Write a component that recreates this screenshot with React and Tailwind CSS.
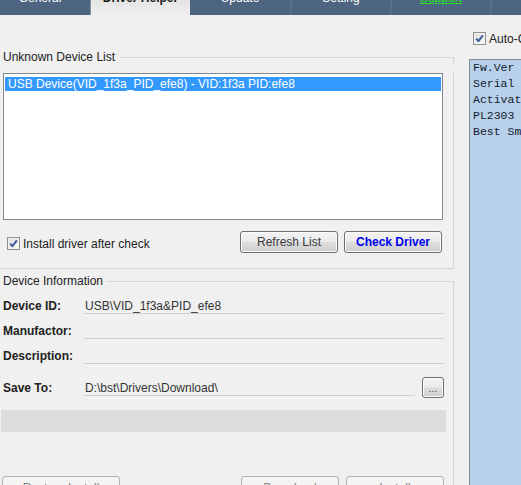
import React from "react";

// Win7-style checkbox with a blue tick
function CheckBox() {
  return (
    <span className="flex h-[13px] w-[13px] shrink-0 items-center justify-center border border-[#8e8f8f] bg-linear-to-br from-[#dcdcdc] to-[#fbfbfb] shadow-[inset_0_0_0_1px_#f4f4f4]">
      <svg viewBox="0 0 11 11" className="h-[11px] w-[11px]">
        <path d="M2.2 5.6 L4.4 8.2 L8.9 2.4" stroke="#3b5a9a" strokeWidth="1.9" fill="none" strokeLinejoin="round" />
      </svg>
    </span>
  );
}

function Button({ children, className = "" }) {
  return (
    <div
      className={
        "flex items-center justify-center rounded-[3px] border border-[#707070] bg-[linear-gradient(#f3f3f3_0%,#ebebeb_48%,#dddddd_52%,#cfcfcf_100%)] text-[12px] leading-[14px] shadow-[inset_0_0_0_1px_#fbfbfb] " +
        className
      }
    >
      {children}
    </div>
  );
}

function DisabledButton({ children, className = "" }) {
  return (
    <div
      className={
        "flex h-[23px] items-center justify-center rounded-[3px] border border-[#adb2b5] bg-[#f4f4f4] text-[12px] leading-[14px] text-[#838383] " +
        className
      }
    >
      {children}
    </div>
  );
}

function InfoRow({ label, value }) {
  return (
    <div className="flex items-end pr-[9px] h-[25px] first:h-[26px]">
      <div className="ml-[3px] w-[81px] shrink-0 pb-[1px] font-bold leading-[14px] text-[#222]">{label}</div>
      <div className="flex-1 border-b border-[#cfcfcf] pl-[1px] leading-[14px] text-[#333]">{value}</div>
    </div>
  );
}

export default function App() {
  return (
    <div className="relative h-[485px] w-[521px] overflow-hidden bg-[#f0f0f0] font-['Liberation_Sans',Arial,sans-serif] text-[12px] text-[#222]">
      {/* tab strip */}
      <div className="flex h-[15px] overflow-hidden bg-[#4e6581]">
        <div className="-ml-[10px] flex">
          <div className="h-[15px] w-[100px] shrink-0 text-center text-white">
            <div className="-mt-[9px] leading-[15px]">General</div>
          </div>
          <div className="h-[15px] w-[100px] shrink-0 border-l border-[#7d8ea3] bg-linear-to-b from-[#e4e4e4] to-[#f0f0f0] text-center font-bold text-[#1a1a1a]">
            <div className="-mt-[9px] leading-[15px]">Driver Helper</div>
          </div>
          <div className="h-[15px] w-[100px] shrink-0 text-center text-white">
            <div className="-mt-[9px] leading-[15px]">Update</div>
          </div>
          <div className="h-[15px] w-[100px] shrink-0 border-l-2 border-[#587090] text-center text-white">
            <div className="-mt-[9px] leading-[15px]">Setting</div>
          </div>
          <div className="h-[15px] w-[100px] shrink-0 border-l-2 border-[#587090] text-center text-[#22e622] underline">
            <div className="-mt-[9px] leading-[15px]">Support</div>
          </div>
          <div className="h-[15px] w-[100px] shrink-0 border-l-2 border-[#587090]" />
        </div>
      </div>

      <div className="flex">
        {/* left column */}
        <div className="w-[454px] shrink-0">
          {/* Unknown Device List group */}
          <div className="mt-[35px]">
            <div className="flex h-[14px]">
              <span className="pl-[3px] pr-[5px] leading-[14px]">Unknown Device List</span>
              <div className="mt-[7px] flex-1 border-r border-t border-[#d5d5d5]" />
            </div>
            <div className="border-b border-r border-[#d5d5d5] pb-[15px]">
              <div className="ml-[3px] mt-[9px] h-[147px] w-[440px] border border-[#828790] bg-white px-[1px] pt-[3px]">
                <div className="h-[14px] whitespace-nowrap bg-[#3399ff] pl-[3px] leading-[14px] text-white">
                  USB Device(VID_1f3a_PID_efe8) - VID:1f3a PID:efe8
                </div>
              </div>
              <div className="mt-[11px] flex h-[22px] items-center pr-[11px]">
                <div className="ml-[7px] mt-[3px] flex items-center gap-[3px]">
                  <CheckBox />
                  <span className="leading-[14px]">Install driver after check</span>
                </div>
                <div className="ml-auto flex gap-[6px]">
                  <Button className="h-[22px] w-[98px] text-[#3a3a3a]">Refresh List</Button>
                  <Button className="h-[22px] w-[98px] font-bold text-[#0000ee]">Check Driver</Button>
                </div>
              </div>
            </div>
          </div>

          {/* Device Information group */}
          <div className="mt-[5px]">
            <div className="flex h-[14px]">
              <span className="pl-[3px] pr-[4px] leading-[14px]">Device Information</span>
              <div className="mt-[7px] flex-1 border-r border-t border-[#d5d5d5]" />
            </div>
            <div className="border-r border-[#d5d5d5] pb-[20px]">
              <InfoRow label="Device ID:" value="USB\VID_1f3a&PID_efe8" />
              <InfoRow label="Manufactor:" value="" />
              <InfoRow label="Description:" value="" />
              <div className="flex h-[34px] items-end pr-[9px]">
                <div className="ml-[3px] w-[81px] shrink-0 pb-[3px] font-bold leading-[14px] text-[#222]">Save To:</div>
                <div className="mb-[2px] mr-[7px] flex-1 border-b border-[#cfcfcf] pl-[1px] leading-[14px] text-[#333]">
                  D:\bst\Drivers\Download\
                </div>
                <Button className="h-[21px] w-[22px] text-[#444]">
                  <span className="mt-[3px] text-[10px] leading-[10px] tracking-[0px]">...</span>
                </Button>
              </div>

              <div className="ml-[1px] mt-[12px] h-[22px] w-[445px] bg-[#dcdcdc]" />

              <div className="mt-[44px] flex">
                <DisabledButton className="ml-[2px] w-[118px]">Restore Install</DisabledButton>
                <DisabledButton className="ml-[121px] w-[98px]">Download</DisabledButton>
                <DisabledButton className="ml-[7px] w-[98px]">Install</DisabledButton>
              </div>
            </div>
          </div>
        </div>

        {/* right column */}
        <div className="w-[67px] shrink-0">
          <div className="ml-[19px] mt-[17px] flex h-[13px] items-center gap-[3px]">
            <CheckBox />
            <span className="whitespace-nowrap leading-[14px]">Auto-Check</span>
          </div>
          <div className="ml-[15px] mt-[14px] h-[440px] w-[80px] border-l border-t border-[#828790] bg-[#b9d0ea] pl-[3px] font-['Liberation_Mono','Courier_New',monospace] text-[11.5px] leading-[16px] text-[#131c2e]">
            <div className="whitespace-nowrap">Fw.Ver :</div>
            <div className="whitespace-nowrap">Serial :</div>
            <div className="whitespace-nowrap">Activation :</div>
            <div className="whitespace-nowrap">PL2303 :</div>
            <div className="whitespace-nowrap">Best Smart :</div>
          </div>
        </div>
      </div>
    </div>
  );
}
